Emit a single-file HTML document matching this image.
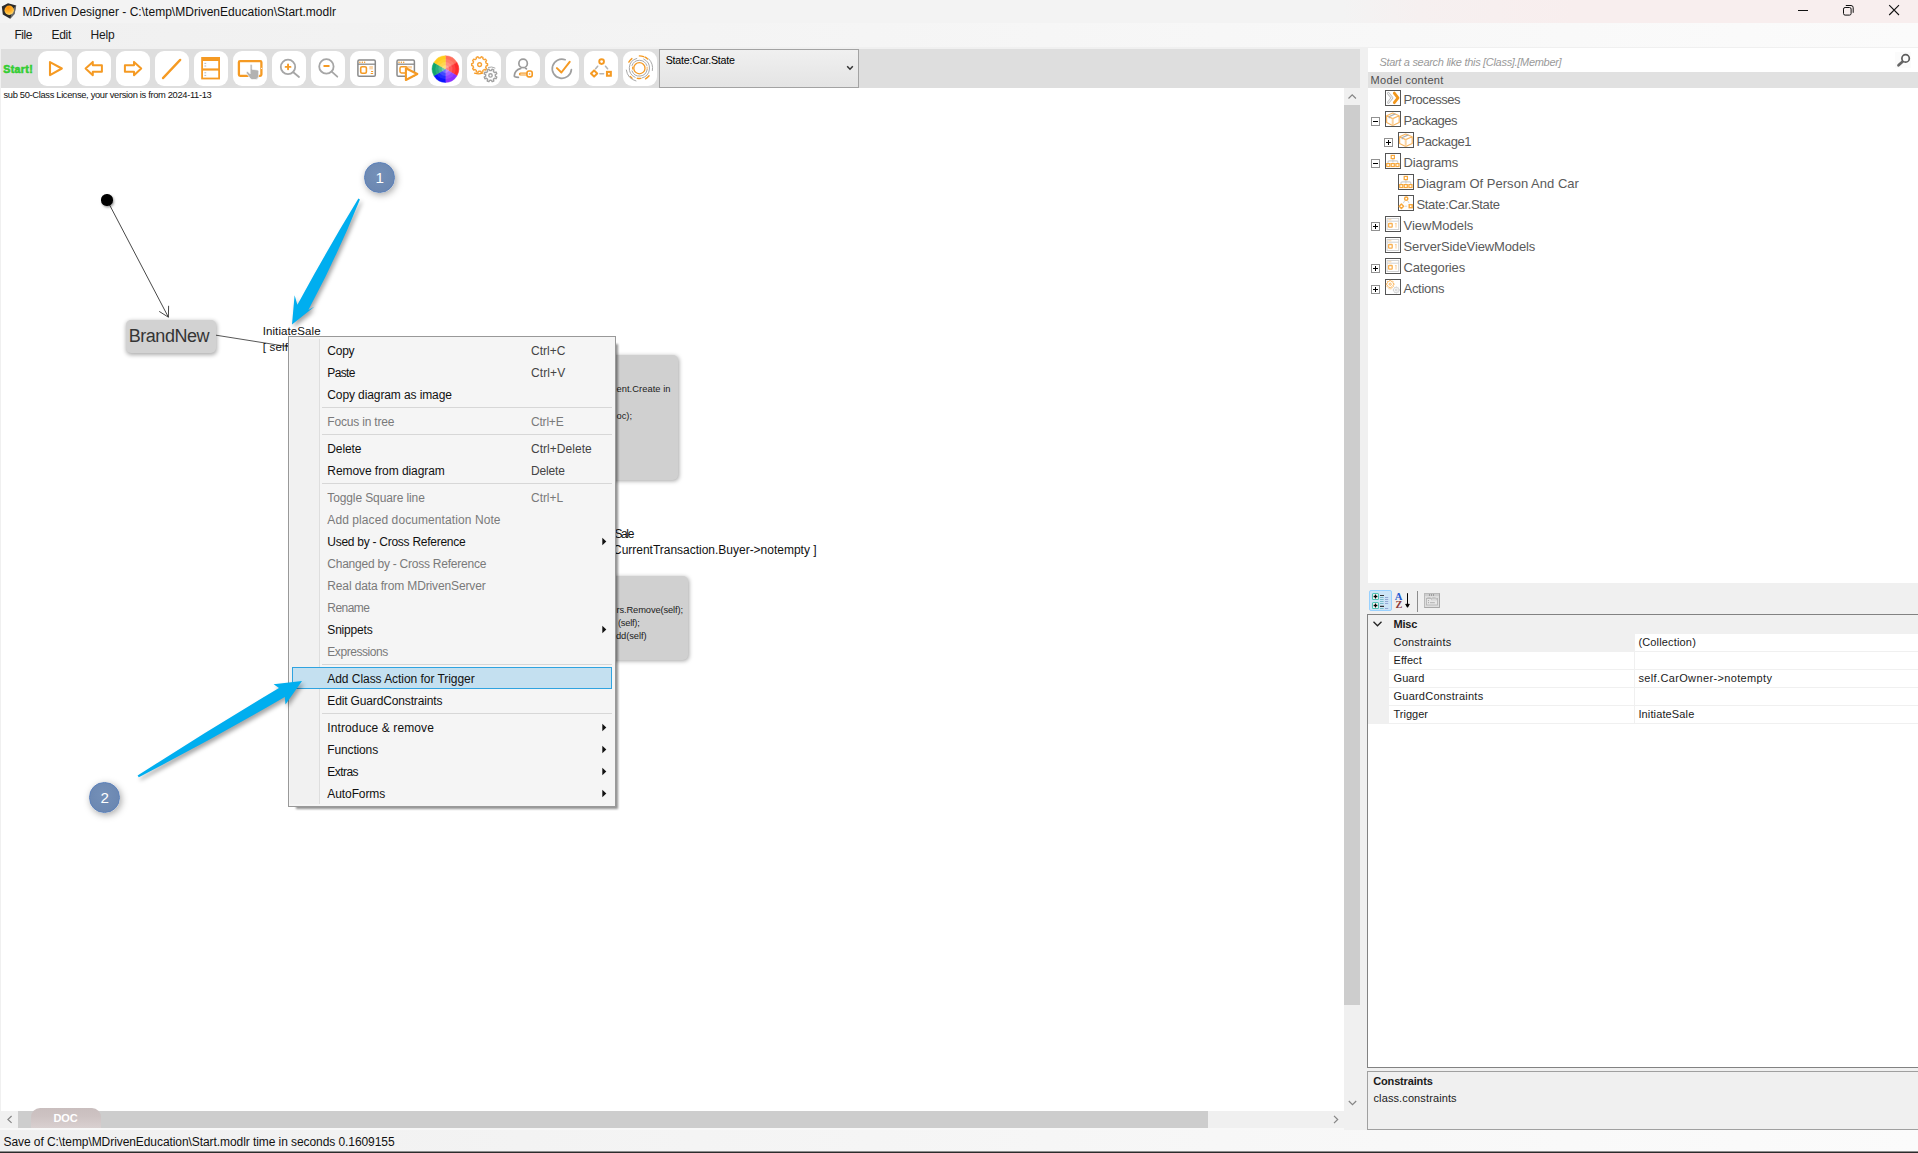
<!DOCTYPE html>
<html lang="en"><head><meta charset="utf-8"><title>MDriven Designer - C:\temp\MDrivenEducation\Start.modlr</title>
<style>

html,body{margin:0;padding:0}
body{width:1918px;height:1153px;position:relative;overflow:hidden;background:#f0f0f0;font-family:"Liberation Sans",sans-serif;}
.a{position:absolute;box-sizing:border-box}
.t{position:absolute;white-space:pre;margin:0;padding:0}
.tb{position:absolute;top:51px;width:34px;height:35px;border-radius:9px;background:#fff}

</style></head>
<body>
<div class="a" style="left:0px;top:0px;width:1918px;height:23px;background:linear-gradient(90deg,#f3f3f3 0%,#f3f3f3 70%,#f6f0f0 74%,#f8eeee 82%,#f8eeee 100%)"></div>
<div class="a" style="left:0px;top:23px;width:1918px;height:24px;background:linear-gradient(90deg,#f0f0f0 0%,#fbfbfb 100%)"></div>
<svg class="a" style="left:1px;top:2px" width="17" height="18" viewBox="0 0 17 18"><defs><radialGradient id="sph" cx="0.4" cy="0.25" r="0.85"><stop offset="0" stop-color="#ff8a00"/><stop offset="0.55" stop-color="#ffb52e"/><stop offset="1" stop-color="#ffe58a"/></radialGradient></defs><path d="M0.8 4.6 L7 1.2 L15.2 3.5 L13.5 12 L9.2 16.8 L1.8 12.6 Z" fill="#2b2b2b"/><path d="M15.2 3.5 L13.5 12 L9.2 16.8 L11.4 7.5 Z" fill="#777" opacity="0.85"/><circle cx="8.2" cy="8.2" r="4.7" fill="url(#sph)"/></svg>
<span class="t" style="left:22.5px;top:3.8px;font-size:12.00px;line-height:16px;color:#111;letter-spacing:0.025px;">MDriven Designer - C:\temp\MDrivenEducation\Start.modlr</span>
<svg class="a" style="left:1780px;top:0" width="138" height="23" viewBox="1780 0 138 23"><path d="M1798 10.5H1808" stroke="#111" stroke-width="1"/><rect x="1843.5" y="7.5" width="7.6" height="7.6" rx="1.6" fill="none" stroke="#111" stroke-width="1"/><path d="M1845.8 5.5 H1851 a2.2 2.2 0 0 1 2.2 2.2 V12.8" fill="none" stroke="#111" stroke-width="1"/><path d="M1889.2 5.2 L1899 15 M1899 5.2 L1889.2 15" stroke="#111" stroke-width="1.1"/></svg>
<span class="t" style="left:14.5px;top:26.8px;font-size:12.00px;line-height:16px;color:#1b1b1b;letter-spacing:-0.461px;">File</span>
<span class="t" style="left:51.5px;top:26.8px;font-size:12.00px;line-height:16px;color:#1b1b1b;letter-spacing:-0.297px;">Edit</span>
<span class="t" style="left:90.5px;top:26.8px;font-size:12.00px;line-height:16px;color:#1b1b1b;letter-spacing:-0.172px;">Help</span>
<div class="a" style="left:1px;top:49px;width:1359px;height:39px;background:#dedede"></div>
<span class="t" style="left:3.2px;top:61.9px;font-size:10.60px;line-height:14px;color:#32cd32;font-weight:bold;letter-spacing:0.388px;-webkit-text-stroke:0.55px #32cd32;">Start!</span>
<div class="tb" style="left:38px"></div>
<div class="tb" style="left:77px"></div>
<div class="tb" style="left:116px"></div>
<div class="tb" style="left:155px"></div>
<div class="tb" style="left:194px"></div>
<div class="tb" style="left:233px"></div>
<div class="tb" style="left:272px"></div>
<div class="tb" style="left:311px"></div>
<div class="tb" style="left:350px"></div>
<div class="tb" style="left:389px"></div>
<div class="tb" style="left:428px"></div>
<div class="tb" style="left:467px"></div>
<div class="tb" style="left:506px"></div>
<div class="tb" style="left:545px"></div>
<div class="tb" style="left:584px"></div>
<div class="tb" style="left:623px"></div>
<svg class="a" style="left:0;top:49px" width="1360" height="39" viewBox="0 49 1360 39"><path d="M50 62.1 L61.8 68.5 L50 75.1 Z" fill="none" stroke="#f59a23" stroke-width="2.1" stroke-linejoin="round"/><path d="M85.6 68.5 L92.8 61.9 L92.8 65.3 L101.9 65.3 L101.9 71.8 L92.8 71.8 L92.8 75.3 Z" fill="none" stroke="#f59a23" stroke-width="2" stroke-linejoin="round"/><path d="M141.2 68.5 L134 61.9 L134 65.3 L124.9 65.3 L124.9 71.8 L134 71.8 L134 75.3 Z" fill="none" stroke="#f59a23" stroke-width="2" stroke-linejoin="round"/><path d="M163 78.1 L180.2 59.9" stroke="#f59a23" stroke-width="2.3" stroke-linecap="round"/><rect x="201.2" y="57" width="18.8" height="22.4" fill="#f59a23"/><rect x="203" y="61" width="15.2" height="7.4" fill="#fff"/><rect x="203" y="70.6" width="15.2" height="7" fill="#fff"/><path d="M204.4 63.4h1.8M204.4 66h1.8M204.4 72.8h1.8M204.4 75.4h1.8" stroke="#b0b0b0" stroke-width="0.9"/><rect x="238.9" y="61.1" width="22.5" height="14.7" rx="1.2" fill="none" stroke="#f59a23" stroke-width="2.3"/><circle cx="261.6" cy="68.3" r="0.6" fill="#fff"/><path d="M250.1 65.4 a1.05 1.05 0 0 1 2.1 0 V69.3 L257.3 69.9 a1.6 1.6 0 0 1 1.5 1.7 L258.6 76.4 a3.4 3.4 0 0 1 -3.4 3.2 H252.6 a3.2 3.2 0 0 1 -2.6 -1.3 L246.6 73.4 a1.1 1.1 0 0 1 1.7 -1.4 L250.1 73.8 Z" fill="#b2b2b2" stroke="#fff" stroke-width="0.7"/><circle cx="288" cy="66.9" r="7.2" fill="none" stroke="#a6a6a6" stroke-width="1.8"/><path d="M293.3 72.3 L299 77" stroke="#a6a6a6" stroke-width="1.8" stroke-linecap="round"/><path d="M285.6 66.9h4.9M288.05 64.4v4.9" stroke="#f59a23" stroke-width="1.9" stroke-linecap="round"/><circle cx="326.4" cy="66.4" r="7.2" fill="none" stroke="#a6a6a6" stroke-width="1.8"/><path d="M331.7 71.7 L337.3 76.7" stroke="#a6a6a6" stroke-width="1.8" stroke-linecap="round"/><path d="M324.2 66h4.6" stroke="#f59a23" stroke-width="1.9" stroke-linecap="round"/><rect x="357.9" y="60.1" width="17.4" height="16.1" rx="1.3" fill="none" stroke="#8a8a8a" stroke-width="1.5"/><path d="M357.9 64.2h17.4" stroke="#8a8a8a" stroke-width="1.3"/><circle cx="359.9" cy="62.2" r="0.75" fill="#f59a23"/><circle cx="362.3" cy="62.2" r="0.75" fill="#f59a23"/><circle cx="364.6" cy="62.2" r="0.75" fill="#f59a23"/><rect x="360.7" y="66.7" width="5.7" height="6.5" rx="1.4" fill="none" stroke="#f59a23" stroke-width="1.6"/><rect x="369.3" y="66" width="3.6" height="3.4" fill="#fbd5a8"/><path d="M371.1 71.5h2M370.7 73.5h2.4" stroke="#f59a23" stroke-width="1.1"/><rect x="397" y="60.1" width="17.4" height="16.1" rx="1.3" fill="none" stroke="#8a8a8a" stroke-width="1.5"/><path d="M397 64.2h17.4" stroke="#8a8a8a" stroke-width="1.3"/><circle cx="399" cy="62.2" r="0.75" fill="#f59a23"/><circle cx="401.4" cy="62.2" r="0.75" fill="#f59a23"/><circle cx="403.7" cy="62.2" r="0.75" fill="#f59a23"/><rect x="400" y="66.8" width="7.4" height="6.2" rx="1.4" fill="none" stroke="#f59a23" stroke-width="1.5"/><rect x="407.6" y="66" width="4.4" height="2.4" fill="#fbd5a8"/><path d="M405.9 68.2 L417.3 74 L405.9 80 Z" fill="#fff" stroke="#f59a23" stroke-width="2.1" stroke-linejoin="round"/><path d="M445.45 69.1 L445.45 55.80 A13.3 13.3 0 0 1 456.97 62.45 Z" fill="#ff6f5c" stroke="#ff6f5c" stroke-width="0.5" stroke-linejoin="round"/><path d="M445.45 69.1 L456.97 62.45 A13.3 13.3 0 0 1 456.97 75.75 Z" fill="#ff2b2b" stroke="#ff2b2b" stroke-width="0.5" stroke-linejoin="round"/><path d="M445.45 69.1 L456.97 75.75 A13.3 13.3 0 0 1 445.45 82.40 Z" fill="#8a30ff" stroke="#8a30ff" stroke-width="0.5" stroke-linejoin="round"/><path d="M445.45 69.1 L445.45 82.40 A13.3 13.3 0 0 1 433.93 75.75 Z" fill="#0a14ff" stroke="#0a14ff" stroke-width="0.5" stroke-linejoin="round"/><path d="M445.45 69.1 L433.93 75.75 A13.3 13.3 0 0 1 433.93 62.45 Z" fill="#10a66c" stroke="#10a66c" stroke-width="0.5" stroke-linejoin="round"/><path d="M445.45 69.1 L433.93 62.45 A13.3 13.3 0 0 1 445.45 55.80 Z" fill="#ffcc1c" stroke="#ffcc1c" stroke-width="0.5" stroke-linejoin="round"/><circle cx="445.45" cy="69.1" r="10.2" fill="#fff" fill-opacity="0.1"/><circle cx="445.45" cy="69.1" r="7" fill="#fff" fill-opacity="0.14"/><circle cx="445.45" cy="69.1" r="3.8" fill="#fff" fill-opacity="0.22"/><path d="M486.18 63.34 L487.55 63.70 L487.55 65.50 L486.18 65.86 L485.66 67.45 L486.56 68.54 L485.50 70.00 L484.19 69.48 L482.83 70.47 L482.92 71.88 L481.20 72.44 L480.44 71.25 L478.76 71.25 L478.00 72.44 L476.28 71.88 L476.37 70.47 L475.01 69.48 L473.70 70.00 L472.64 68.54 L473.54 67.45 L473.02 65.86 L471.65 65.50 L471.65 63.70 L473.02 63.34 L473.54 61.75 L472.64 60.66 L473.70 59.20 L475.01 59.72 L476.37 58.73 L476.28 57.32 L478.00 56.76 L478.76 57.95 L480.44 57.95 L481.20 56.76 L482.92 57.32 L482.83 58.73 L484.19 59.72 L485.50 59.20 L486.56 60.66 L485.66 61.75Z" fill="none" stroke="#f7a236" stroke-width="1.4" stroke-linejoin="round"/><circle cx="479.6" cy="64.6" r="1.9" fill="none" stroke="#f7a236" stroke-width="1.4"/><path d="M495.34 76.15 L496.80 77.00 L496.10 78.69 L494.47 78.27 L493.39 79.36 L493.82 80.99 L492.13 81.69 L491.28 80.24 L489.75 80.24 L488.90 81.70 L487.21 81.00 L487.63 79.37 L486.54 78.29 L484.91 78.72 L484.21 77.03 L485.66 76.18 L485.66 74.65 L484.20 73.80 L484.90 72.11 L486.53 72.53 L487.61 71.44 L487.18 69.81 L488.87 69.11 L489.72 70.56 L491.25 70.56 L492.10 69.10 L493.79 69.80 L493.37 71.43 L494.46 72.51 L496.09 72.08 L496.79 73.77 L495.34 74.62Z" fill="none" stroke="#a2a2a2" stroke-width="1.4" stroke-linejoin="round"/><circle cx="490.5" cy="75.4" r="1.7" fill="none" stroke="#a2a2a2" stroke-width="1.4"/><path d="M474.6 73.2 q4 1.3 8 0" fill="none" stroke="#f59a23" stroke-width="1.4" stroke-linecap="round"/><path d="M488.4 67.4 q3.4 -1.2 6.6 0.6" fill="none" stroke="#a8a8a8" stroke-width="1" stroke-linecap="round"/><circle cx="523.1" cy="63.4" r="4.25" fill="none" stroke="#9c9c9c" stroke-width="1.7"/><path d="M520.8 68.4 C517 69.6 514.4 72.8 514.3 76 C514.3 77.2 515.2 77.3 518.4 77.3 M525.4 68.3 L526.4 68.8" fill="none" stroke="#9a9a9a" stroke-width="1.7" stroke-linecap="round"/><path d="M520.4 74.1 H526.6" fill="none" stroke="#f59a23" stroke-width="3" stroke-linecap="round"/><path d="M520.8 74.1 H526" stroke="#fff" stroke-width="0.8" stroke-linecap="round"/><rect x="527" y="71" width="5.2" height="5.9" rx="1.9" fill="#fff" stroke="#f59a23" stroke-width="1.6"/><circle cx="529.6" cy="74" r="0.8" fill="#f59a23"/><path d="M565.2 59.7 A9.6 9.6 0 1 0 571.4 69.6" fill="none" stroke="#a0a0a0" stroke-width="1.7" stroke-linecap="round"/><path d="M556.9 68.1 L561.4 72.5 L569.7 61.9" fill="none" stroke="#f59a23" stroke-width="2" stroke-linecap="round" stroke-linejoin="round"/><path d="M597.7 66.2 L595.6 68.8 M605.5 66.2 L607.6 68.8 M599.9 73.7 H603.6" stroke="#b4b4b4" stroke-width="1.5" stroke-linecap="round"/><circle cx="601.6" cy="61.6" r="2.35" fill="none" stroke="#f59a23" stroke-width="1.9"/><path d="M594.1 70.4 L597.2 73.5 L594.1 76.6 L591 73.5 Z" fill="none" stroke="#f59a23" stroke-width="2" stroke-linejoin="round"/><rect x="607" y="71.9" width="3.8" height="3.8" fill="none" stroke="#f59a23" stroke-width="2.1"/><circle cx="639.4" cy="68.2" r="5.6" fill="none" stroke="#f59a23" stroke-width="1.3"/><path d="M632.57 69.16 A6.9 6.9 0 0 1 632.60 67.00" fill="none" stroke="#f59a23" stroke-width="1" stroke-linecap="round"/><path d="M631.98 65.50 A7.9 7.9 0 0 1 646.82 65.50" fill="none" stroke="#a9a9a9" stroke-width="1" stroke-linecap="round"/><path d="M647.18 69.57 A7.9 7.9 0 0 1 631.98 70.90" fill="none" stroke="#a9a9a9" stroke-width="1" stroke-linecap="round"/><path d="M647.12 67.11 A7.8 7.8 0 0 1 647.12 69.29" fill="none" stroke="#f8b45c" stroke-width="1" stroke-linecap="round"/><path d="M635.13 77.35 A10.1 10.1 0 0 1 636.79 58.44" fill="none" stroke="#a9a9a9" stroke-width="1" stroke-linecap="round"/><path d="M643.67 59.05 A10.1 10.1 0 0 1 642.01 77.96" fill="none" stroke="#a9a9a9" stroke-width="1" stroke-linecap="round"/><path d="M640.83 78.40 A10.3 10.3 0 0 1 637.26 78.27" fill="none" stroke="#f59a23" stroke-width="1.3" stroke-linecap="round"/><path d="M639.40 55.90 A12.3 12.3 0 0 1 643.61 56.64" fill="none" stroke="#f59a23" stroke-width="1.4" stroke-linecap="round"/><path d="M644.98 57.24 A12.3 12.3 0 0 1 647.63 59.06" fill="none" stroke="#f59a23" stroke-width="1.4" stroke-linecap="round"/><path d="M649.09 75.77 A12.3 12.3 0 0 1 645.55 78.85" fill="none" stroke="#f59a23" stroke-width="1.4" stroke-linecap="round"/><path d="M632.05 78.31 A12.5 12.5 0 0 1 630.11 76.56" fill="none" stroke="#f59a23" stroke-width="1.4" stroke-linecap="round"/><path d="M628.83 62.10 A12.2 12.2 0 0 1 631.89 58.59" fill="none" stroke="#f59a23" stroke-width="1.4" stroke-linecap="round"/><path d="M648.73 58.87 A13.2 13.2 0 0 1 652.40 70.49" fill="none" stroke="#a9a9a9" stroke-width="1" stroke-linecap="round"/><path d="M635.98 80.95 A13.2 13.2 0 0 1 626.33 70.04" fill="none" stroke="#a9a9a9" stroke-width="1" stroke-linecap="round"/></svg>
<div class="a" style="left:659px;top:49px;width:200px;height:39px;border:1px solid #a3a3a3;background:linear-gradient(#f0f0f0,#e4e4e4)"></div>
<span class="t" style="left:665.7px;top:53.3px;font-size:10.67px;line-height:14px;color:#000;letter-spacing:-0.219px;">State:Car.State</span>
<svg class="a" style="left:845px;top:63px" width="10" height="10" viewBox="845 63 10 10"><path d="M847.2 66.2 L850 69.2 L852.8 66.2" fill="none" stroke="#333" stroke-width="1.5"/></svg>
<div class="a" style="left:1px;top:88px;width:1343px;height:1023px;background:#fff"></div>
<span class="t" style="left:3.5px;top:88.7px;font-size:9.33px;line-height:12px;color:#111;letter-spacing:-0.328px;">sub 50-Class License, your version is from 2024-11-13</span>
<svg class="a" style="left:0;top:88px" width="1344" height="1023" viewBox="0 88 1344 1023"><path d="M107 200 L168.4 317.2 M159.2 311.4 L168.4 317.2 L168.6 305.8" fill="none" stroke="#333" stroke-width="0.9"/><path d="M216 335.2 L289 346.8" stroke="#444" stroke-width="0.9"/></svg><div class="a" style="left:101.4px;top:194.4px;width:11.2px;height:11.2px;border-radius:50%;background:#000;box-shadow:1px 1.5px 2.5px rgba(0,0,0,.4)"></div><div class="a" style="left:126px;top:319.5px;width:90px;height:33px;background:#d2d2d2;border-radius:5px;box-shadow:0.5px 1.5px 4px rgba(0,0,0,.33)"></div><span class="t" style="left:128.8px;top:324.5px;font-size:18.00px;line-height:23px;color:#353535;letter-spacing:-0.481px;">BrandNew</span><span class="t" style="left:262.7px;top:323.5px;font-size:11.50px;line-height:15px;color:#111;letter-spacing:0.091px;">InitiateSale</span><span class="t" style="left:262.7px;top:339.5px;font-size:11.50px;line-height:15px;color:#111;letter-spacing:0.218px;">[ self.CarOwner-&gt;notempty ]</span><div class="a" style="left:560px;top:355.3px;width:117.6px;height:124.3px;background:#d0d0d0;border-radius:5px;box-shadow:0.5px 1px 4.5px rgba(0,0,0,.36)"></div><span class="t" style="left:616.5px;top:383.1px;font-size:9.33px;line-height:12px;color:#222;letter-spacing:0.044px;">ent.Create in</span><span class="t" style="left:616.5px;top:410.3px;font-size:9.33px;line-height:12px;color:#222;letter-spacing:-0.016px;">oc);</span><span class="t" style="left:614.4px;top:525.8px;font-size:12.00px;line-height:16px;color:#111;letter-spacing:-1.358px;">Sale</span><span class="t" style="left:613.0px;top:541.8px;font-size:12.00px;line-height:16px;color:#111;letter-spacing:-0.013px;">CurrentTransaction.Buyer-&gt;notempty ]</span><div class="a" style="left:560px;top:576px;width:127.6px;height:84px;background:#d0d0d0;border-radius:5px;box-shadow:0.5px 1px 4.5px rgba(0,0,0,.36)"></div><span class="t" style="left:616.5px;top:604.2px;font-size:9.33px;line-height:12px;color:#222;letter-spacing:-0.120px;">rs.Remove(self);</span><span class="t" style="left:618.0px;top:617.2px;font-size:9.33px;line-height:12px;color:#222;letter-spacing:-0.261px;">(self);</span><span class="t" style="left:616.0px;top:630.1px;font-size:9.33px;line-height:12px;color:#222;letter-spacing:-0.076px;">dd(self)</span>
<div class="a" style="left:1344px;top:88px;width:16px;height:1023px;background:#f0f0f0"></div>
<div class="a" style="left:1344px;top:105px;width:16px;height:900px;background:#cdcdcd"></div>
<svg class="a" style="left:1344px;top:88px" width="16" height="17" viewBox="0 0 16 17"><path d="M4.5 10.5 L8.2 6.8 L11.9 10.5" fill="none" stroke="#858585" stroke-width="1.2"/></svg>
<svg class="a" style="left:1344px;top:1094px" width="16" height="17" viewBox="0 0 16 17"><path d="M4.8 7 L8.5 10.7 L12.2 7" fill="none" stroke="#858585" stroke-width="1.2"/></svg>
<div class="a" style="left:0px;top:1111px;width:1344px;height:17px;background:#f0f0f0"></div>
<div class="a" style="left:18px;top:1111px;width:1190px;height:17px;background:#cdcdcd"></div>
<svg class="a" style="left:0;top:1111px" width="18" height="17" viewBox="0 0 18 17"><path d="M11.6 5 L7.9 8.5 L11.6 11.9" fill="none" stroke="#858585" stroke-width="1.2"/></svg>
<svg class="a" style="left:1327px;top:1111px" width="17" height="17" viewBox="0 0 17 17"><path d="M7 4.8 L10.7 8.5 L7 12.2" fill="none" stroke="#858585" stroke-width="1.2"/></svg>
<div class="a" style="left:31px;top:1108px;width:70px;height:20px;border-radius:9px 9px 0 0;background:linear-gradient(#c9bebe,#cdc2c2 40%,#d9d0d0)"></div>
<span class="t" style="left:53.5px;top:1110.9px;font-size:11.00px;line-height:14px;color:#fff;font-weight:bold;letter-spacing:-0.151px;">DOC</span>
<div class="a" style="left:0px;top:1128px;width:1344px;height:2px;background:#f8f8f8"></div>
<div class="a" style="left:0px;top:1130px;width:1918px;height:21px;background:linear-gradient(90deg,#f0f0f0 0%,#fbfbfb 100%)"></div>
<div class="a" style="left:0px;top:1151px;width:1918px;height:1px;background:#8e8e8e"></div>
<div class="a" style="left:0px;top:1152px;width:1918px;height:1px;background:#2b2b2b"></div>
<span class="t" style="left:3.5px;top:1134.1px;font-size:12.00px;line-height:16px;color:#111;letter-spacing:-0.074px;">Save of C:\temp\MDrivenEducation\Start.modlr time in seconds 0.1609155</span>
<div class="a" style="left:1368px;top:48px;width:550px;height:24px;background:#fff"></div><span class="t" style="left:1379.4px;top:55.2px;font-size:11.00px;line-height:14px;color:#9a9a9a;font-style:italic;letter-spacing:-0.303px;">Start a search like this [Class].[Member]</span><svg class="a" style="left:1895px;top:52px" width="16" height="16" viewBox="0 0 16 16"><rect width="16" height="16" fill="#fbfbfb"/><path d="M7.7 9.5 L3.5 13.3" stroke="#666" stroke-width="2.7" stroke-linecap="round"/><circle cx="10.6" cy="6.4" r="3.7" fill="#fdfdfd" stroke="#5c5c5c" stroke-width="1.7"/></svg><div class="a" style="left:1368px;top:72px;width:550px;height:16px;background:#e1e1e1"></div><span class="t" style="left:1370.6px;top:73.0px;font-size:11.00px;line-height:14px;color:#505050;letter-spacing:0.299px;">Model content</span><div class="a" style="left:1368px;top:88px;width:550px;height:495px;background:#fff"></div><svg class="a" style="left:1385px;top:90px" width="16" height="16" viewBox="0 0 16 16"><rect x="0.5" y="0.5" width="15" height="15" fill="#fff" stroke="#555" stroke-width="1"/><path d="M3.3 3.3 L7 7.8 L3.3 12.5" fill="none" stroke="#c2c2c2" stroke-width="2.7" stroke-linecap="round" stroke-linejoin="round"/><path d="M3.3 3.3 L7 7.8 L3.3 12.5" fill="none" stroke="#fff" stroke-width="0.9" stroke-linecap="round" stroke-linejoin="round"/><path d="M9.3 3.1 L13 7.8 L9.3 12.7" fill="none" stroke="#f2971c" stroke-width="2.8" stroke-linecap="round" stroke-linejoin="round"/></svg><span class="t" style="left:1403.5px;top:91.0px;font-size:13.00px;line-height:17px;color:#5a5a5a;letter-spacing:-0.456px;">Processes</span><svg class="a" style="left:1371px;top:117px" width="9" height="9" viewBox="0 0 9 9"><rect x="0.5" y="0.5" width="8" height="8" fill="#fff" stroke="#919191" stroke-width="1"/><path d="M2 4.5H7" stroke="#000" stroke-width="1"/></svg><svg class="a" style="left:1385px;top:111px" width="16" height="16" viewBox="0 0 16 16"><rect x="0.5" y="0.5" width="15" height="15" fill="#fff" stroke="#555" stroke-width="1"/><path d="M7.7 2 L14.2 4.8 V11.5 L7.7 14.5 L1.6 11.5 V4.8 Z M1.6 4.8 L7.7 7.6 L14.2 4.8" fill="none" stroke="#f9b661" stroke-width="1.2" stroke-linejoin="round"/><path d="M7.7 7.6 V14.5" fill="none" stroke="#fbd3a0" stroke-width="2"/><path d="M4.3 7.3 V5.5 L10.4 2.9" fill="none" stroke="#b0b0b0" stroke-width="1.3" stroke-linejoin="round"/></svg><span class="t" style="left:1403.5px;top:112.0px;font-size:13.00px;line-height:17px;color:#5a5a5a;letter-spacing:-0.424px;">Packages</span><svg class="a" style="left:1384px;top:138px" width="9" height="9" viewBox="0 0 9 9"><rect x="0.5" y="0.5" width="8" height="8" fill="#fff" stroke="#919191" stroke-width="1"/><path d="M2 4.5H7" stroke="#000" stroke-width="1"/><path d="M4.5 2V7" stroke="#000" stroke-width="1"/></svg><svg class="a" style="left:1398px;top:132px" width="16" height="16" viewBox="0 0 16 16"><rect x="0.5" y="0.5" width="15" height="15" fill="#fff" stroke="#555" stroke-width="1"/><path d="M7.7 2 L14.2 4.8 V11.5 L7.7 14.5 L1.6 11.5 V4.8 Z M1.6 4.8 L7.7 7.6 L14.2 4.8" fill="none" stroke="#f9b661" stroke-width="1.2" stroke-linejoin="round"/><path d="M7.7 7.6 V14.5" fill="none" stroke="#fbd3a0" stroke-width="2"/><path d="M4.3 7.3 V5.5 L10.4 2.9" fill="none" stroke="#b0b0b0" stroke-width="1.3" stroke-linejoin="round"/></svg><span class="t" style="left:1416.5px;top:133.0px;font-size:13.00px;line-height:17px;color:#5a5a5a;letter-spacing:-0.391px;">Package1</span><svg class="a" style="left:1371px;top:159px" width="9" height="9" viewBox="0 0 9 9"><rect x="0.5" y="0.5" width="8" height="8" fill="#fff" stroke="#919191" stroke-width="1"/><path d="M2 4.5H7" stroke="#000" stroke-width="1"/></svg><svg class="a" style="left:1385px;top:153px" width="16" height="16" viewBox="0 0 16 16"><rect x="0.5" y="0.5" width="15" height="15" fill="#fff" stroke="#555" stroke-width="1"/><path d="M7.9 5.6 V9.6 M3 10 V9 Q3 7.8 4.2 7.8 H11.6 Q12.8 7.8 12.8 9 V10" fill="none" stroke="#cfcfcf" stroke-width="1.2"/><rect x="6.2" y="2.4" width="3.2" height="3.2" fill="#fff" stroke="#f8a83c" stroke-width="1.2"/><rect x="1.7" y="10.6" width="3.1" height="2.9" fill="#fff" stroke="#f8a83c" stroke-width="1.2"/><rect x="6.2" y="10.6" width="3.1" height="2.9" fill="#fff" stroke="#f8a83c" stroke-width="1.2"/><rect x="10.9" y="10.6" width="3.1" height="2.9" fill="#fff" stroke="#f8a83c" stroke-width="1.2"/></svg><span class="t" style="left:1403.5px;top:154.0px;font-size:13.00px;line-height:17px;color:#5a5a5a;letter-spacing:-0.116px;">Diagrams</span><svg class="a" style="left:1398px;top:174px" width="16" height="16" viewBox="0 0 16 16"><rect x="0.5" y="0.5" width="15" height="15" fill="#fff" stroke="#555" stroke-width="1"/><path d="M7.9 5.6 V9.6 M3 10 V9 Q3 7.8 4.2 7.8 H11.6 Q12.8 7.8 12.8 9 V10" fill="none" stroke="#cfcfcf" stroke-width="1.2"/><rect x="6.2" y="2.4" width="3.2" height="3.2" fill="#fff" stroke="#f8a83c" stroke-width="1.2"/><rect x="1.7" y="10.6" width="3.1" height="2.9" fill="#fff" stroke="#f8a83c" stroke-width="1.2"/><rect x="6.2" y="10.6" width="3.1" height="2.9" fill="#fff" stroke="#f8a83c" stroke-width="1.2"/><rect x="10.9" y="10.6" width="3.1" height="2.9" fill="#fff" stroke="#f8a83c" stroke-width="1.2"/></svg><span class="t" style="left:1416.5px;top:175.0px;font-size:13.00px;line-height:17px;color:#5a5a5a;letter-spacing:0.022px;">Diagram Of Person And Car</span><svg class="a" style="left:1398px;top:195px" width="16" height="16" viewBox="0 0 16 16"><rect x="0.5" y="0.5" width="15" height="15" fill="#fff" stroke="#555" stroke-width="1"/><path d="M6.6 6 L5.2 8.2 M9.8 6 L11.2 8.2 M6.8 11.2 H9.2" stroke="#d4d4d4" stroke-width="1"/><circle cx="8.2" cy="3.7" r="1.6" fill="#fff" stroke="#f8a83c" stroke-width="1.5"/><path d="M3.4 9 L5.6 11.2 L3.4 13.4 L1.2 11.2 Z" fill="#fff" stroke="#f8a83c" stroke-width="1.4" stroke-linejoin="round"/><rect x="11.2" y="9.7" width="3" height="3" fill="#fff" stroke="#f8a83c" stroke-width="1.4"/></svg><span class="t" style="left:1416.5px;top:196.0px;font-size:13.00px;line-height:17px;color:#5a5a5a;letter-spacing:-0.331px;">State:Car.State</span><svg class="a" style="left:1371px;top:222px" width="9" height="9" viewBox="0 0 9 9"><rect x="0.5" y="0.5" width="8" height="8" fill="#fff" stroke="#919191" stroke-width="1"/><path d="M2 4.5H7" stroke="#000" stroke-width="1"/><path d="M4.5 2V7" stroke="#000" stroke-width="1"/></svg><svg class="a" style="left:1385px;top:216px" width="16" height="16" viewBox="0 0 16 16"><rect x="0.5" y="0.5" width="15" height="15" fill="#fff" stroke="#555" stroke-width="1"/><rect x="2.1" y="2.5" width="11.6" height="11" fill="none" stroke="#d2d2d2" stroke-width="1"/><path d="M2.1 5.2 H13.7" stroke="#d2d2d2" stroke-width="1"/><path d="M3.2 3.8 H6.4" stroke="#fbd3a0" stroke-width="1"/><rect x="3.6" y="7.5" width="3.6" height="3.6" rx="0.6" fill="none" stroke="#f9b050" stroke-width="1.3"/><path d="M9.9 7.6 H11.6 M11 7.4 V11.6" stroke="#fbcf98" stroke-width="1"/></svg><span class="t" style="left:1403.5px;top:217.0px;font-size:13.00px;line-height:17px;color:#5a5a5a;letter-spacing:-0.006px;">ViewModels</span><svg class="a" style="left:1385px;top:237px" width="16" height="16" viewBox="0 0 16 16"><rect x="0.5" y="0.5" width="15" height="15" fill="#fff" stroke="#555" stroke-width="1"/><rect x="2.1" y="2.5" width="11.6" height="11" fill="none" stroke="#d2d2d2" stroke-width="1"/><path d="M2.1 5.2 H13.7" stroke="#d2d2d2" stroke-width="1"/><path d="M3.2 3.8 H6.4" stroke="#fbd3a0" stroke-width="1"/><rect x="3.6" y="7.5" width="3.6" height="3.6" rx="0.6" fill="none" stroke="#f9b050" stroke-width="1.3"/><path d="M9.9 7.6 H11.6 M11 7.4 V11.6" stroke="#fbcf98" stroke-width="1"/></svg><span class="t" style="left:1403.5px;top:238.0px;font-size:13.00px;line-height:17px;color:#5a5a5a;letter-spacing:-0.124px;">ServerSideViewModels</span><svg class="a" style="left:1371px;top:264px" width="9" height="9" viewBox="0 0 9 9"><rect x="0.5" y="0.5" width="8" height="8" fill="#fff" stroke="#919191" stroke-width="1"/><path d="M2 4.5H7" stroke="#000" stroke-width="1"/><path d="M4.5 2V7" stroke="#000" stroke-width="1"/></svg><svg class="a" style="left:1385px;top:258px" width="16" height="16" viewBox="0 0 16 16"><rect x="0.5" y="0.5" width="15" height="15" fill="#fff" stroke="#555" stroke-width="1"/><rect x="2.1" y="2.5" width="11.6" height="11" fill="none" stroke="#d2d2d2" stroke-width="1"/><path d="M2.1 5.2 H13.7" stroke="#d2d2d2" stroke-width="1"/><path d="M3.2 3.8 H6.4" stroke="#fbd3a0" stroke-width="1"/><rect x="3.6" y="7.5" width="3.6" height="3.6" rx="0.6" fill="none" stroke="#f9b050" stroke-width="1.3"/><path d="M9.9 7.6 H11.6 M11 7.4 V11.6" stroke="#fbcf98" stroke-width="1"/></svg><span class="t" style="left:1403.5px;top:259.0px;font-size:13.00px;line-height:17px;color:#5a5a5a;letter-spacing:-0.127px;">Categories</span><svg class="a" style="left:1371px;top:285px" width="9" height="9" viewBox="0 0 9 9"><rect x="0.5" y="0.5" width="8" height="8" fill="#fff" stroke="#919191" stroke-width="1"/><path d="M2 4.5H7" stroke="#000" stroke-width="1"/><path d="M4.5 2V7" stroke="#000" stroke-width="1"/></svg><svg class="a" style="left:1385px;top:279px" width="16" height="16" viewBox="0 0 16 16"><rect x="0.5" y="0.5" width="15" height="15" fill="#fff" stroke="#555" stroke-width="1"/><path d="M8.21 4.48 L9.06 4.65 L9.06 5.75 L8.21 5.92 L7.84 6.82 L8.32 7.54 L7.54 8.32 L6.82 7.84 L5.92 8.21 L5.75 9.06 L4.65 9.06 L4.48 8.21 L3.58 7.84 L2.86 8.32 L2.08 7.54 L2.56 6.82 L2.19 5.92 L1.34 5.75 L1.34 4.65 L2.19 4.48 L2.56 3.58 L2.08 2.86 L2.86 2.08 L3.58 2.56 L4.48 2.19 L4.65 1.34 L5.75 1.34 L5.92 2.19 L6.82 2.56 L7.54 2.08 L8.32 2.86 L7.84 3.58Z" fill="none" stroke="#f9b050" stroke-width="0.9" stroke-linejoin="round"/><circle cx="5.2" cy="5.2" r="1.1" fill="none" stroke="#f9b050" stroke-width="0.9"/><path d="M3.2 9.6 q2 0.8 4 0" fill="none" stroke="#fbcf98" stroke-width="0.8"/><path d="M13.63 10.44 L14.37 10.56 L14.37 11.44 L13.63 11.56 L13.35 12.25 L13.78 12.86 L13.16 13.48 L12.55 13.05 L11.86 13.33 L11.74 14.07 L10.86 14.07 L10.74 13.33 L10.05 13.05 L9.44 13.48 L8.82 12.86 L9.25 12.25 L8.97 11.56 L8.23 11.44 L8.23 10.56 L8.97 10.44 L9.25 9.75 L8.82 9.14 L9.44 8.52 L10.05 8.95 L10.74 8.67 L10.86 7.93 L11.74 7.93 L11.86 8.67 L12.55 8.95 L13.16 8.52 L13.78 9.14 L13.35 9.75Z" fill="none" stroke="#cccccc" stroke-width="0.9" stroke-linejoin="round"/><circle cx="11.3" cy="11" r="0.9" fill="none" stroke="#cccccc" stroke-width="0.9"/></svg><span class="t" style="left:1403.5px;top:280.0px;font-size:13.00px;line-height:17px;color:#5a5a5a;letter-spacing:-0.277px;">Actions</span><div class="a" style="left:1369px;top:590px;width:23px;height:21px;background:#cce4f7;border:1px solid #99d1ff;border-radius:2px"></div><svg class="a" style="left:1369px;top:590px" width="80" height="22" viewBox="1369 590 80 22"><rect x="1372.5" y="593.5" width="6" height="6" rx="1" fill="#fff" stroke="#4fc3b5" stroke-width="1.1"/><path d="M1373.6 596.5h3.8M1375.5 594.6v3.8" stroke="#000" stroke-width="1.3"/><rect x="1372.5" y="602.5" width="6" height="6" rx="1" fill="#fff" stroke="#4fc3b5" stroke-width="1.1"/><path d="M1373.6 605.5h3.8M1375.5 603.6v3.8" stroke="#000" stroke-width="1.3"/><path d="M1380 595.5h4M1380 606.4h4" stroke="#333" stroke-width="1.2"/><path d="M1380 597.5h3.6M1380 599.5h3.6M1380 601.5h3.6M1380 603.5h3.6M1380 608.5h3.6" stroke="#6fb8c4" stroke-width="0.9"/><path d="M1385 597.5h3.2M1385 599.5h3.2M1385 601.5h3.2M1385 603.5h3.2M1385 608.5h3.2" stroke="#8f9fd0" stroke-width="0.9"/><text x="1394.7" y="599.9" font-family="Liberation Serif,serif" font-size="10.6" font-weight="bold" fill="#2459d0">A</text><text x="1395.6" y="608" font-family="Liberation Serif,serif" font-size="10.3" font-weight="bold" fill="#8c3b3b">Z</text><path d="M1407.5 593.2V606.5M1405.7 604.3L1407.5 607.3L1409.3 604.3Z" stroke="#000" stroke-width="1" fill="#000"/><path d="M1417.5 591V612" stroke="#8d8d8d" stroke-width="1"/><rect x="1424.5" y="593.5" width="15" height="14" fill="#dedede" stroke="#bababa" stroke-width="1"/><path d="M1424.5 607.5 H1439.5 V593.5" fill="none" stroke="#a8a8a8" stroke-width="1"/><rect x="1425" y="594" width="14" height="2" fill="#cdcdcd"/><path d="M1429 595h1M1431 595h1M1433 595h1" stroke="#8f8f8f" stroke-width="1.4"/><rect x="1426.5" y="598.5" width="11" height="6.5" fill="#e6e6e6" stroke="#b6b6b6" stroke-width="0.9"/><path d="M1427.3 597.6h3.4M1432.2 597.6h3.4" stroke="#c2c2c2" stroke-width="0.9"/><rect x="1431.4" y="598.4" width="5.2" height="1.5" fill="#efefef" stroke="#c0c0c0" stroke-width="0.7"/><circle cx="1428.5" cy="600.6" r="0.6" fill="#a8a8a8"/><circle cx="1428.5" cy="602.7" r="0.6" fill="#a8a8a8"/><path d="M1430 602.7h4.8" stroke="#b0b0b0" stroke-width="1"/></svg><div class="a" style="left:1367px;top:614px;width:552px;height:454px;background:#fff;border:1px solid #828282;border-right:none"></div><div class="a" style="left:1368px;top:615px;width:550px;height:19px;background:#f0f0f0"></div><div class="a" style="left:1368px;top:633px;width:21px;height:91px;background:#f0f0f0"></div><div class="a" style="left:1389px;top:633px;width:246px;height:19px;background:#f0f0f0"></div><div class="a" style="left:1389px;top:651px;width:529px;height:1px;background:#f0f0f0"></div><div class="a" style="left:1389px;top:669px;width:529px;height:1px;background:#f0f0f0"></div><div class="a" style="left:1389px;top:687px;width:529px;height:1px;background:#f0f0f0"></div><div class="a" style="left:1389px;top:705px;width:529px;height:1px;background:#f0f0f0"></div><div class="a" style="left:1389px;top:723px;width:529px;height:1px;background:#f0f0f0"></div><div class="a" style="left:1634px;top:633px;width:1px;height:91px;background:#f0f0f0"></div><svg class="a" style="left:1372px;top:620px" width="11" height="8" viewBox="0 0 11 8"><path d="M1.5 1.8 L5.5 5.8 L9.5 1.8" fill="none" stroke="#222" stroke-width="1.3"/></svg><span class="t" style="left:1393.5px;top:616.9px;font-size:11.00px;line-height:14px;color:#1b1b1b;font-weight:bold;letter-spacing:-0.192px;">Misc</span><span class="t" style="left:1393.5px;top:634.8px;font-size:11.00px;line-height:14px;color:#1b1b1b;letter-spacing:0.205px;">Constraints</span><span class="t" style="left:1638.4px;top:634.8px;font-size:11.00px;line-height:14px;color:#1b1b1b;letter-spacing:0.163px;">(Collection)</span><span class="t" style="left:1393.5px;top:652.7px;font-size:11.00px;line-height:14px;color:#1b1b1b;letter-spacing:0.060px;">Effect</span><span class="t" style="left:1393.5px;top:670.7px;font-size:11.00px;line-height:14px;color:#1b1b1b;letter-spacing:0.084px;">Guard</span><span class="t" style="left:1638.4px;top:670.7px;font-size:11.00px;line-height:14px;color:#1b1b1b;letter-spacing:0.363px;">self.CarOwner-&gt;notempty</span><span class="t" style="left:1393.5px;top:688.6px;font-size:11.00px;line-height:14px;color:#1b1b1b;letter-spacing:0.230px;">GuardConstraints</span><span class="t" style="left:1393.5px;top:706.6px;font-size:11.00px;line-height:14px;color:#1b1b1b;letter-spacing:-0.005px;">Trigger</span><span class="t" style="left:1638.4px;top:706.6px;font-size:11.00px;line-height:14px;color:#1b1b1b;letter-spacing:0.130px;">InitiateSale</span><div class="a" style="left:1367px;top:1071px;width:552px;height:59px;background:#f0f0f0;border:1px solid #a0a0a0;border-right:none"></div><span class="t" style="left:1373.2px;top:1074.4px;font-size:11.00px;line-height:14px;color:#1b1b1b;font-weight:bold;letter-spacing:-0.148px;">Constraints</span><span class="t" style="left:1373.5px;top:1091.0px;font-size:11.00px;line-height:14px;color:#1b1b1b;letter-spacing:0.111px;">class.constraints</span>
<div class="a" style="left:296px;top:344px;width:322.4px;height:465.4px;background:rgba(0,0,0,.43);filter:blur(1px)"></div><div class="a" style="left:288px;top:336px;width:328px;height:471px;background:#f5f5f5;border:1px solid #999"></div><div class="a" style="left:290px;top:339px;width:30px;height:465px;background:#f1f1f1;border-right:1px solid #dedede"></div><span class="t" style="left:327.3px;top:343.3px;font-size:12.00px;line-height:16px;color:#111;letter-spacing:-0.229px;">Copy</span><span class="t" style="left:531.0px;top:343.3px;font-size:12.00px;line-height:16px;color:#444;letter-spacing:-0.007px;">Ctrl+C</span><span class="t" style="left:327.3px;top:365.3px;font-size:12.00px;line-height:16px;color:#111;letter-spacing:-0.637px;">Paste</span><span class="t" style="left:531.0px;top:365.3px;font-size:12.00px;line-height:16px;color:#444;letter-spacing:0.102px;">Ctrl+V</span><span class="t" style="left:327.3px;top:387.3px;font-size:12.00px;line-height:16px;color:#111;letter-spacing:-0.106px;">Copy diagram as image</span><div class="a" style="left:322px;top:407px;width:290px;height:1px;background:#d7d7d7"></div><span class="t" style="left:327.3px;top:414.3px;font-size:12.00px;line-height:16px;color:#7a7a7a;letter-spacing:-0.183px;">Focus in tree</span><span class="t" style="left:531.0px;top:414.3px;font-size:12.00px;line-height:16px;color:#7a7a7a;letter-spacing:-0.198px;">Ctrl+E</span><div class="a" style="left:322px;top:434px;width:290px;height:1px;background:#d7d7d7"></div><span class="t" style="left:327.3px;top:441.3px;font-size:12.00px;line-height:16px;color:#111;letter-spacing:-0.115px;">Delete</span><span class="t" style="left:531.0px;top:441.3px;font-size:12.00px;line-height:16px;color:#444;letter-spacing:0.031px;">Ctrl+Delete</span><span class="t" style="left:327.3px;top:463.3px;font-size:12.00px;line-height:16px;color:#111;letter-spacing:-0.064px;">Remove from diagram</span><span class="t" style="left:531.0px;top:463.3px;font-size:12.00px;line-height:16px;color:#444;letter-spacing:-0.148px;">Delete</span><div class="a" style="left:322px;top:483px;width:290px;height:1px;background:#d7d7d7"></div><span class="t" style="left:327.3px;top:490.3px;font-size:12.00px;line-height:16px;color:#7a7a7a;letter-spacing:-0.111px;">Toggle Square line</span><span class="t" style="left:531.0px;top:490.3px;font-size:12.00px;line-height:16px;color:#7a7a7a;letter-spacing:-0.041px;">Ctrl+L</span><span class="t" style="left:327.3px;top:512.3px;font-size:12.00px;line-height:16px;color:#7a7a7a;letter-spacing:0.086px;">Add placed documentation Note</span><span class="t" style="left:327.3px;top:534.3px;font-size:12.00px;line-height:16px;color:#111;letter-spacing:-0.265px;">Used by - Cross Reference</span><svg class="a" style="left:601.8px;top:536.6px" width="5" height="9" viewBox="0 0 5 9"><path d="M0.3 0.8 L4.3 4.5 L0.3 8.2 Z" fill="#111"/></svg><span class="t" style="left:327.3px;top:556.3px;font-size:12.00px;line-height:16px;color:#7a7a7a;letter-spacing:-0.236px;">Changed by - Cross Reference</span><span class="t" style="left:327.3px;top:578.3px;font-size:12.00px;line-height:16px;color:#7a7a7a;letter-spacing:-0.134px;">Real data from MDrivenServer</span><span class="t" style="left:327.3px;top:600.3px;font-size:12.00px;line-height:16px;color:#7a7a7a;letter-spacing:-0.560px;">Rename</span><span class="t" style="left:327.3px;top:622.3px;font-size:12.00px;line-height:16px;color:#111;letter-spacing:-0.175px;">Snippets</span><svg class="a" style="left:601.8px;top:624.6px" width="5" height="9" viewBox="0 0 5 9"><path d="M0.3 0.8 L4.3 4.5 L0.3 8.2 Z" fill="#111"/></svg><span class="t" style="left:327.3px;top:644.3px;font-size:12.00px;line-height:16px;color:#7a7a7a;letter-spacing:-0.443px;">Expressions</span><div class="a" style="left:322px;top:664px;width:290px;height:1px;background:#d7d7d7"></div><div class="a" style="left:292px;top:667px;width:320px;height:22px;background:#c4e0f0;border:1px solid #2fa3e0"></div><span class="t" style="left:327.3px;top:671.3px;font-size:12.00px;line-height:16px;color:#111;letter-spacing:-0.051px;">Add Class Action for Trigger</span><span class="t" style="left:327.3px;top:693.3px;font-size:12.00px;line-height:16px;color:#111;letter-spacing:-0.146px;">Edit GuardConstraints</span><div class="a" style="left:322px;top:713px;width:290px;height:1px;background:#d7d7d7"></div><span class="t" style="left:327.3px;top:720.3px;font-size:12.00px;line-height:16px;color:#111;letter-spacing:0.110px;">Introduce &amp; remove</span><svg class="a" style="left:601.8px;top:722.6px" width="5" height="9" viewBox="0 0 5 9"><path d="M0.3 0.8 L4.3 4.5 L0.3 8.2 Z" fill="#111"/></svg><span class="t" style="left:327.3px;top:742.3px;font-size:12.00px;line-height:16px;color:#111;letter-spacing:-0.148px;">Functions</span><svg class="a" style="left:601.8px;top:744.6px" width="5" height="9" viewBox="0 0 5 9"><path d="M0.3 0.8 L4.3 4.5 L0.3 8.2 Z" fill="#111"/></svg><span class="t" style="left:327.3px;top:764.3px;font-size:12.00px;line-height:16px;color:#111;letter-spacing:-0.536px;">Extras</span><svg class="a" style="left:601.8px;top:766.6px" width="5" height="9" viewBox="0 0 5 9"><path d="M0.3 0.8 L4.3 4.5 L0.3 8.2 Z" fill="#111"/></svg><span class="t" style="left:327.3px;top:786.3px;font-size:12.00px;line-height:16px;color:#111;letter-spacing:-0.088px;">AutoForms</span><svg class="a" style="left:601.8px;top:788.6px" width="5" height="9" viewBox="0 0 5 9"><path d="M0.3 0.8 L4.3 4.5 L0.3 8.2 Z" fill="#111"/></svg>
<svg class="a" style="left:0;top:88px;filter:drop-shadow(2px 3px 2px rgba(0,0,0,.35))" width="1344" height="1023" viewBox="0 88 1344 1023"><path d="M359.9 199.4 Q337.5 255.6 308.4 310 L314.6 306.6 L292 324.6 L294.6 295.2 L297.4 304.8 Q326.5 251 358.4 198.6 Z" fill="#00aeef"/><path d="M137.6 775.6 Q209 729.6 279 688 L273.6 684.2 L302 681 L285.5 704.4 L284.8 697 Q213.5 738.5 138.8 777.2 Z" fill="#00aeef"/></svg><div class="a" style="left:364.4px;top:162.4px;width:30.2px;height:30.2px;border-radius:50%;background:radial-gradient(circle at 45% 40%,#7490b8,#6b87b1 75%);border:1.3px solid #5b80b9;box-shadow:1.5px 2px 7px rgba(0,0,0,.34)"></div><span class="t" style="left:375.5px;top:167.6px;font-size:15.20px;line-height:20px;color:#fff;">1</span><div class="a" style="left:89.4px;top:782.4px;width:30.2px;height:30.2px;border-radius:50%;background:radial-gradient(circle at 45% 40%,#7490b8,#6b87b1 75%);border:1.3px solid #5b80b9;box-shadow:1.5px 2px 7px rgba(0,0,0,.34)"></div><span class="t" style="left:100.5px;top:787.6px;font-size:15.20px;line-height:20px;color:#fff;">2</span>
</body></html>
